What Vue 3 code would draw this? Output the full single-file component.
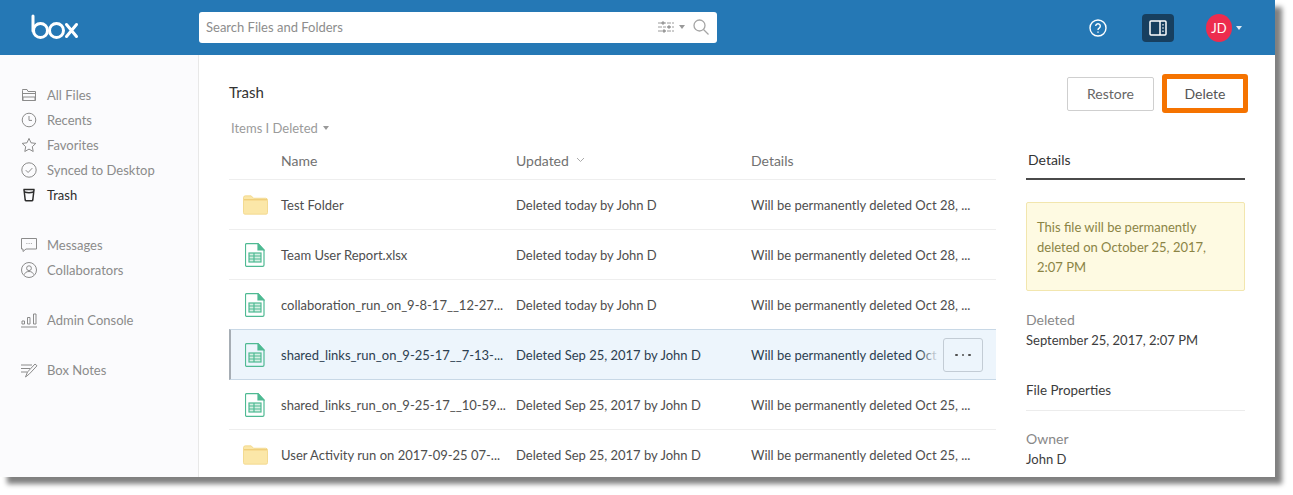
<script setup>
const navGroups = [
  [
    { label: 'All Files', paths: ['M2.5 4.5v10h13v-9H8L7 3.5H2.5z', 'M2.5 7.5h13', 'M3 11h12v3.5H3z'] },
    { label: 'Recents', paths: ['M9 2.2a6.8 6.8 0 1 0 0 13.6a6.8 6.8 0 1 0 0-13.6z', 'M9 5v4.4h3'] },
    { label: 'Favorites', paths: ['M9 2.4l2 4.4 4.8.6-3.5 3.3.9 4.8L9 13.1l-4.2 2.4.9-4.8-3.5-3.3L7 6.8z'] },
    { label: 'Synced to Desktop', paths: ['M9 1.8a7.2 7.2 0 1 0 0 14.4a7.2 7.2 0 1 0 0-14.4z', 'M5.8 9.2l2.3 2.3 4.2-4.4'] },
    { label: 'Trash', active: true, paths: ['M3.5 3.5h11', 'M4 3.5l1.2 10.5a1 1 0 0 0 1 .8h5.6a1 1 0 0 0 1-.8L14 3.5', 'M4.6 6c2.500.8 6.300.8 8.800 0'] }
  ],
  [
    { label: 'Messages', paths: ['M1.5 2.5h15v10.5H6l-3 2.5V13H1.500z', 'M6.500 7.500h.8', 'M8.700 7.500h.8', 'M10.900 7.500h.8'] },
    { label: 'Collaborators', paths: ['M9 1.500a7.500 7.500 0 1 0 0 15a7.500 7.500 0 1 0 0-15z', 'M9 4.800a2.400 2.400 0 1 0 0 4.800a2.400 2.400 0 1 0 0-4.800z', 'M4.500 13.500c.4-2 2-3 4.500-3s4.100 1 4.500 3'] }
  ],
  [
    { label: 'Admin Console', paths: ['M2 10h2.500v3H2z', 'M7.500 6.500H10V13H7.500z', 'M13.500 3H16v10h-2.500z', 'M1 16h16'] }
  ],
  [
    { label: 'Box Notes', paths: ['M1 4h11', 'M1 7.500h9', 'M1 11h6', 'M5.500 16l2-5L15 3l2 1.800-7.500 8z'] }
  ]
]

const rows = [
  { type: 'folder', name: 'Test Folder', updated: 'Deleted today by John D', details: 'Will be permanently deleted Oct 28, ...' },
  { type: 'sheet', name: 'Team User Report.xlsx', updated: 'Deleted today by John D', details: 'Will be permanently deleted Oct 28, ...' },
  { type: 'sheet', name: 'collaboration_run_on_9-8-17__12-27...', updated: 'Deleted today by John D', details: 'Will be permanently deleted Oct 28, ...' },
  { type: 'sheet', name: 'shared_links_run_on_9-25-17__7-13-...', updated: 'Deleted Sep 25, 2017 by John D', details: 'Will be permanently deleted Oct 25, ...', selected: true },
  { type: 'sheet', name: 'shared_links_run_on_9-25-17__10-59...', updated: 'Deleted Sep 25, 2017 by John D', details: 'Will be permanently deleted Oct 25, ...' },
  { type: 'folder', name: 'User Activity run on 2017-09-25 07-...', updated: 'Deleted Sep 25, 2017 by John D', details: 'Will be permanently deleted Oct 25, ...' }
]
</script>

<template>
  <div class="page">
    <div class="window">
      <header class="topbar">
        <div class="logo-cell">
          <svg class="logo" width="48" height="26" viewBox="0 0 48 26" fill="none" stroke="#fff" stroke-width="3" stroke-linecap="round">
            <path d="M2 2v15" />
            <circle cx="9.500" cy="16.500" r="7" />
            <circle cx="25.500" cy="16.500" r="7" />
            <path d="M35.500 10.500l10 12M45.500 10.500l-10 12" />
          </svg>
        </div>
        <div class="search">
          <span class="search-text">Search Files and Folders</span>
          <svg width="16" height="14" viewBox="0 0 16 14" fill="none" stroke="#9a9a9a" stroke-width="1">
            <path d="M0 3h16M0 7h16M0 11h16" stroke-dasharray="4 1 3 1" />
            <circle cx="5" cy="3" r="1.200" fill="#9a9a9a" />
            <circle cx="11" cy="7" r="1.200" fill="#9a9a9a" />
            <circle cx="6" cy="11" r="1.200" fill="#9a9a9a" />
          </svg>
          <span class="caret caret-grey search-caret"></span>
          <svg class="magnifier" width="16" height="16" viewBox="0 0 16 16" fill="none" stroke="#a5a5a5" stroke-width="1.300">
            <circle cx="6.500" cy="6.500" r="5.500" />
            <path d="M10.500 10.500l5 5" />
          </svg>
        </div>
        <div class="top-actions">
          <svg class="help" width="18" height="18" viewBox="0 0 18 18" fill="none" stroke="#fff" stroke-width="1.400">
            <circle cx="9" cy="9" r="8" />
            <path d="M6.700 7.100a2.300 2.300 0 1 1 3.500 2c-.8.500-1.200 1-1.200 1.900" />
            <path d="M9 12.600v1.200" />
          </svg>
          <button class="panel-toggle" type="button" aria-label="Toggle details">
            <svg width="18" height="16" viewBox="0 0 18 16" fill="none" stroke="#fff" stroke-width="1.500">
              <rect x="1" y="1" width="16" height="14" rx="1" />
              <path d="M11 1v14" />
              <path d="M14 4v1.500M14 7.200v1.500M14 10.400v1.500" stroke-width="1.200" />
            </svg>
          </button>
          <span class="avatar">JD</span>
          <span class="caret caret-white"></span>
        </div>
      </header>

      <div class="shell">
        <nav class="sidebar">
          <ul v-for="(group, g) in navGroups" :key="g" class="nav-group">
            <li v-for="item in group" :key="item.label" class="nav-item" :class="{ active: item.active }">
              <svg width="18" height="18" viewBox="0 0 18 18" fill="none" stroke="currentColor" stroke-width="1">
                <path v-for="d in item.paths" :key="d" :d="d" />
              </svg>
              <span>{{ item.label }}</span>
            </li>
          </ul>
        </nav>

        <main class="main">
          <div class="title-row">
            <h1 class="title">Trash</h1>
            <div class="actions">
              <button class="btn" type="button">Restore</button>
              <button class="btn btn-highlight" type="button">Delete</button>
            </div>
          </div>

          <div class="content">
            <section class="list">
              <div class="filter">Items I Deleted <span class="caret caret-grey"></span></div>
              <div class="grid-row head">
                <span></span>
                <span>Name</span>
                <span class="sorted">Updated
                  <svg width="9" height="6" viewBox="0 0 9 6" fill="none" stroke="#aaa" stroke-width="1"><path d="M1 1l3.500 3.500L8 1" /></svg>
                </span>
                <span>Details</span>
              </div>
              <div v-for="row in rows" :key="row.name" class="grid-row item" :class="{ selected: row.selected }">
                <span class="icon-cell">
                  <svg v-if="row.type === 'folder'" width="25" height="20" viewBox="0 0 26 20">
                    <path d="M0.500 2.500q0-2 2-2h6l2.500 2.500h12.500q2 0 2 2v13q0 1.500-1.500 1.500h-22q-1.500 0-1.500-1.500z" fill="#fbe7a8" stroke="#f3d98f" />
                    <path d="M1 4.500h24" stroke="#f0cf7c" stroke-width="1.500" />
                  </svg>
                  <svg v-else width="20" height="24" viewBox="0 0 20 24" fill="none" stroke="#4fba93" stroke-width="1.200">
                    <path d="M1.500 0.700h11.500l6 6.300v15q0 1.300-1.300 1.300H1.500q-1 0-1-1.300V2q0-1.300 1-1.300z" />
                    <path d="M13 0.700v6.300h6z" fill="#4fba93" />
                    <rect x="4" y="10" width="12" height="9" fill="#d5efe3" />
                    <path d="M4 13h12M4 16h12M9 10v9" />
                  </svg>
                </span>
                <span class="cell">{{ row.name }}</span>
                <span class="cell">{{ row.updated }}</span>
                <span class="cell">{{ row.details }}</span>
                <template v-if="row.selected">
                  <span class="fade"></span>
                  <button class="more" type="button" aria-label="More options">
                    <i></i><i></i><i></i>
                  </button>
                </template>
              </div>
            </section>

            <aside class="details">
              <div class="tab">Details</div>
              <div class="notice">This file will be permanently deleted on October 25, 2017, 2:07 PM</div>
              <div class="field-label deleted">Deleted</div>
              <div class="field-value">September 25, 2017, 2:07 PM</div>
              <div class="section-title">File Properties</div>
              <div class="field-label owner">Owner</div>
              <div class="field-value">John D</div>
            </aside>
          </div>
        </main>
      </div>
    </div>
  </div>
</template>

<style>
html, body { background: #fff; overflow: hidden; }
</style>

<style scoped>
.page {
  width: 1293px;
  height: 495px;
  font-family: Lato, "Liberation Sans", sans-serif;
  font-size: 14px;
  color: #4e4e4e;
  overflow: hidden;
  background: #fff;
}
.window {
  width: 1275px;
  height: 477px;
  display: flex;
  flex-direction: column;
  background: #fff;
  box-shadow: 7px 7px 5px #808080;
}
.topbar {
  height: 55px;
  flex: none;
  display: flex;
  align-items: center;
  background: #2578b5;
}
.logo-cell { width: 199px; flex: none; padding: 0 0 0 31px; display: flex; box-sizing: border-box; }
.logo { margin-top: -2px; }
.search {
  width: 518px;
  height: 31px;
  box-sizing: border-box;
  margin-top: -1px;
  padding: 0 8px 0 7px;
  background: #fff;
  border-radius: 3px;
  display: flex;
  align-items: center;
}
.search-text { flex: 1; color: #8d8d8d; font-size: 13px; }
.search-caret { margin: 0 8px 0 5px; }
.top-actions { flex: 1; display: flex; align-items: center; padding-left: 372px; }
.help { margin-right: 35px; }
.panel-toggle {
  width: 32px;
  height: 28px;
  padding: 0;
  border: 0;
  border-radius: 4px;
  background: #173f5f;
  display: flex;
  align-items: center;
  justify-content: center;
  margin-right: 32px;
}
.avatar {
  width: 26px;
  height: 28px;
  border-radius: 50%;
  background: #ed2c4e;
  color: #fff;
  display: flex;
  align-items: center;
  justify-content: center;
  font-size: 13px;
  margin-right: 4px;
}
.caret {
  display: inline-block;
  width: 0;
  height: 0;
  border-left: 3.500px solid transparent;
  border-right: 3.500px solid transparent;
  border-top: 4px solid #999;
}
.caret-white { border-top-color: #dfeaf3; }
.shell { flex: 1; min-height: 0; display: flex; }
.sidebar {
  width: 199px;
  flex: none;
  box-sizing: border-box;
  padding: 27px 0 0 20px;
  background: #fbfbfd;
  border-right: 1px solid #e8e8e8;
  font-size: 13px;
}
.nav-group { list-style: none; margin: 0 0 25px; padding: 0; }
.nav-item {
  height: 25px;
  display: flex;
  align-items: center;
  gap: 9px;
  color: #8b8b8b;
}
.nav-item.active { color: #2d2d2d; }
.nav-item.active svg { stroke-width: 1.500; }
.main {
  flex: 1;
  min-width: 0;
  padding: 19px 27px 0 30px;
  overflow: hidden;
}
.title-row { display: flex; align-items: center; justify-content: space-between; height: 39px; }
.title { margin: 0 0 4px; font-size: 15px; font-weight: 400; color: #333; }
.actions { display: flex; align-items: center; gap: 8px; }
.btn {
  font: inherit;
  color: #666;
  background: #fff;
  border: 1px solid #cfcfcf;
  border-radius: 2px;
  width: 87px;
  height: 34px;
  padding: 0;
}
.btn-highlight {
  width: 86px;
  height: 39px;
  border: 5px solid #f57300;
  border-radius: 3px;
  color: #555;
}
.content { display: flex; gap: 30px; }
.list { width: 767px; flex: none; }
.filter { height: 30px; padding-left: 2px; display: flex; align-items: center; gap: 5px; color: #9b9b9b; font-size: 13px; }
.grid-row {
  position: relative;
  display: grid;
  grid-template-columns: 52px 235px 235px 1fr;
  align-items: center;
  box-sizing: border-box;
  border-bottom: 1px solid #eeeeee;
}
.head { height: 37px; padding-bottom: 2px; color: #717171; }
.sorted { display: flex; align-items: center; gap: 7px; }
.item { height: 50px; font-size: 13px; }
.cell { white-space: nowrap; }
.icon-cell { display: flex; justify-content: center; }
.selected {
  grid-template-columns: 50px 235px 235px 1fr;
  background: #edf5fc;
  border-top: 1px solid #c8d8e6;
  border-bottom: 1px solid #c8d8e6;
  border-left: 2px solid #a6adb4;
  margin-top: -1px;
  height: 51px;
  color: #2c3e50;
}
.selected .icon-cell { margin-left: -2px; }
.fade {
  position: absolute;
  right: 53px;
  top: 0;
  bottom: 0;
  width: 24px;
  background: linear-gradient(to right, rgba(237, 245, 252, 0), #edf5fc 85%);
}
.fade::after {
  content: "";
  position: absolute;
  left: 100%;
  top: 0;
  bottom: 0;
  width: 53px;
  background: #edf5fc;
}
.more {
  position: absolute;
  right: 13px;
  top: 8px;
  width: 40px;
  height: 34px;
  padding: 0;
  border: 1px solid #c3ccd5;
  border-radius: 3px;
  background: #edf5fc;
  display: flex;
  align-items: center;
  justify-content: center;
  gap: 4px;
}
.more i { width: 2.500px; height: 2.500px; border-radius: 50%; background: #4e4e4e; }
.details { width: 219px; flex: none; padding-top: 28px; color: #3c3c3c; }
.tab {
  height: 39px;
  box-sizing: border-box;
  border-bottom: 2px solid #4a4a4a;
  padding: 0 0 0 2px;
  display: flex;
  align-items: center;
  color: #333;
}
.notice {
  margin-top: 22px;
  box-sizing: border-box;
  height: 89px;
  padding: 14px 10px;
  line-height: 20px;
  font-size: 13px;
  background: #fefae2;
  border: 1px solid #f2e6ae;
  border-radius: 2px;
  color: #8b8445;
}
.field-label { color: #888; line-height: 20px; }
.field-value { line-height: 20px; color: #3c3c3c; font-size: 13px; }
.deleted { margin-top: 19px; }
.section-title {
  margin-top: 30px;
  line-height: 20px;
  padding-bottom: 10px;
  border-bottom: 1px solid #ececec;
  color: #3c3c3c;
  font-size: 13.400px;
}
.owner { margin-top: 18px; }
</style>
